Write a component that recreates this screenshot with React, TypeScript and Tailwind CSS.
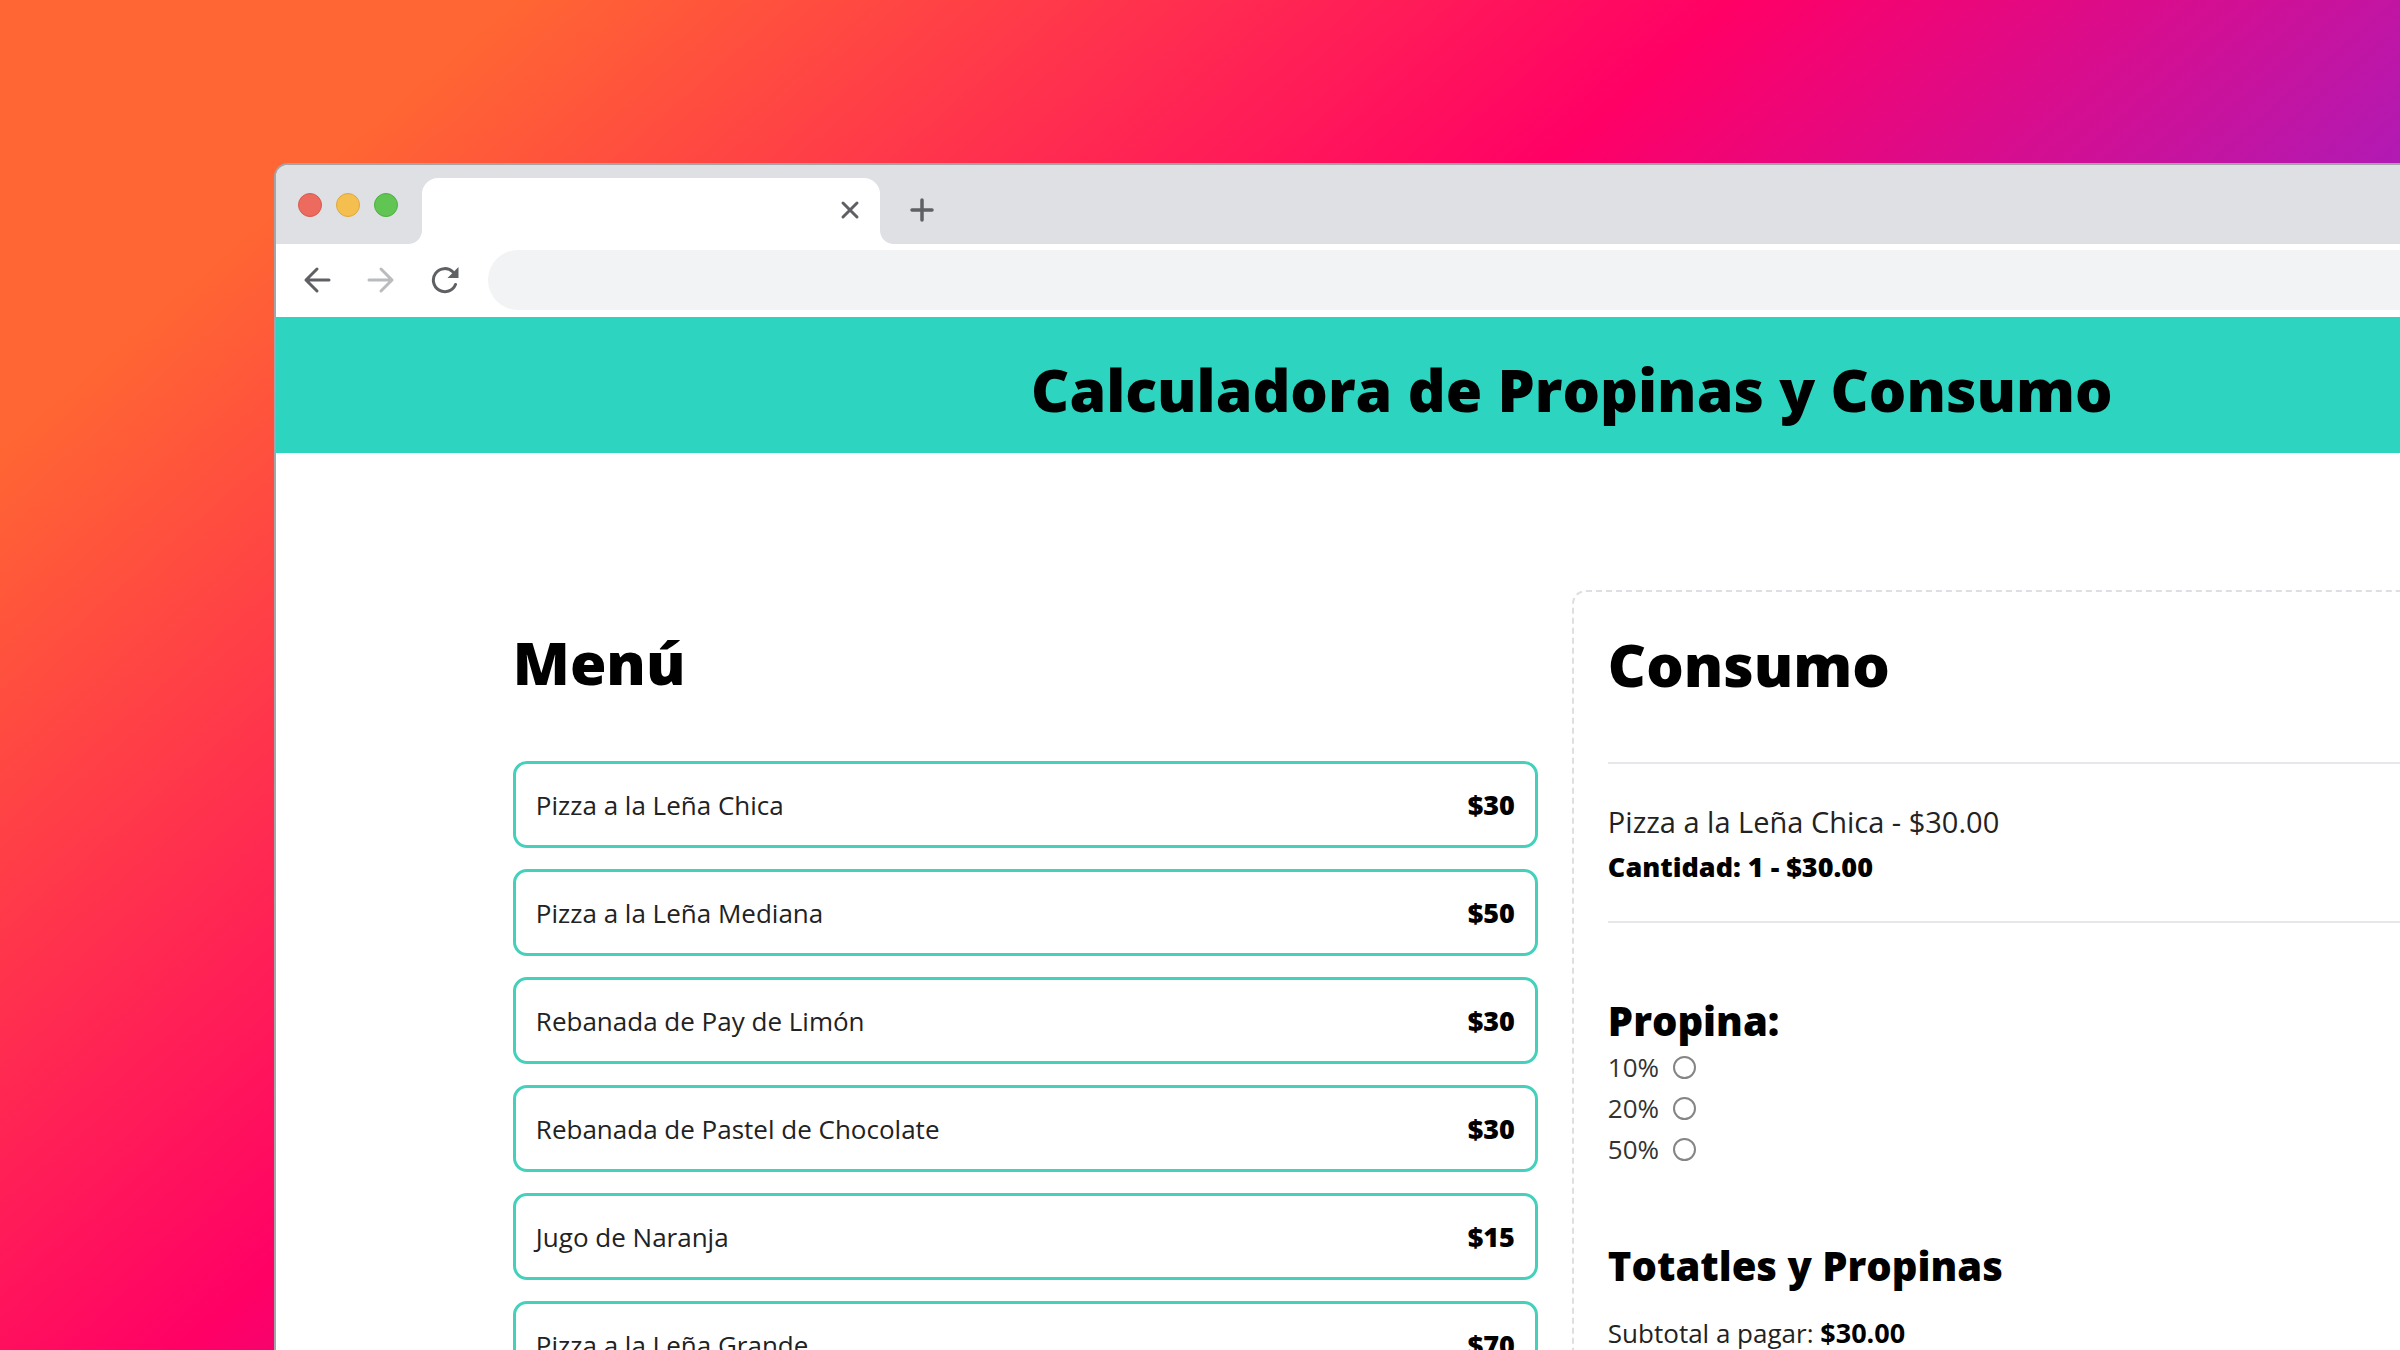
import React, { ReactNode } from "react";

const menu = [
  { id: 1, name: "Pizza a la Leña Chica", price: 30 },
  { id: 2, name: "Pizza a la Leña Mediana", price: 50 },
  { id: 3, name: "Rebanada de Pay de Limón", price: 30 },
  { id: 4, name: "Rebanada de Pastel de Chocolate", price: 30 },
  { id: 5, name: "Jugo de Naranja", price: 15 },
  { id: 6, name: "Pizza a la Leña Grande", price: 70 },
];

const tips = ["10%", "20%", "50%"];

function Icon({ children }: { children: ReactNode }) {
  return (
    <svg
      viewBox="0 0 28 28"
      className="size-7"
      fill="none"
      stroke="currentColor"
      strokeWidth="3"
      strokeLinecap="round"
      strokeLinejoin="round"
      aria-hidden="true"
    >
      {children}
    </svg>
  );
}

function TabBar() {
  return (
    <div className="flex h-[79px] items-end bg-[#dee0e4]">
      <div className="flex gap-[14px] self-center pl-[22px]">
        <span className="size-6 rounded-full border border-[#d65a50] bg-[#ed6a5e]" />
        <span className="size-6 rounded-full border border-[#dea73e] bg-[#f5bf4f]" />
        <span className="size-6 rounded-full border border-[#51ad42] bg-[#61c554]" />
      </div>
      <svg viewBox="0 0 14 14" className="ml-[10px] size-[14px] fill-white" aria-hidden="true">
        <path d="M14 0V14H0C8 14 14 8 14 0Z" />
      </svg>
      <div className="flex h-[66px] w-[458px] items-center justify-end rounded-t-[16px] bg-white pr-4 pb-[2px]">
        <button type="button" aria-label="Cerrar pestaña" className="text-[#5f6063]">
          <Icon>
            <path d="M7 7L21 21M21 7L7 21" />
          </Icon>
        </button>
      </div>
      <svg viewBox="0 0 14 14" className="size-[14px] fill-white" aria-hidden="true">
        <path d="M0 0V14H14C6 14 0 8 0 0Z" />
      </svg>
      <button type="button" aria-label="Nueva pestaña" className="mb-5 ml-[14px] text-[#5f6063]">
        <Icon>
          <path d="M14 4V24M4 14H24" strokeWidth="3.500" />
        </Icon>
      </button>
    </div>
  );
}

function Toolbar() {
  return (
    <div className="flex h-[73px] items-center bg-white pb-[2px] pl-[27px]">
      <div className="flex gap-9">
        <button type="button" aria-label="Atrás" className="text-[#5f6063]">
          <Icon>
            <path d="M26 14H3M14 3L3 14L14 25" />
          </Icon>
        </button>
        <button type="button" aria-label="Adelante" className="text-[#babbbd]">
          <Icon>
            <path d="M2 14H25M14 3L25 14L14 25" />
          </Icon>
        </button>
        <button type="button" aria-label="Recargar" className="text-[#5f6063]">
          <Icon>
            <path d="M24.500 18.500A11.500 11.500 0 1 1 22 6" />
            <path d="M27.500 1V12H16.500Z" fill="currentColor" stroke="none" />
          </Icon>
        </button>
      </div>
      <input
        type="text"
        aria-label="Dirección"
        className="ml-[29px] h-[60px] min-w-0 flex-1 rounded-l-full bg-[#f1f3f4] px-8 text-2xl outline-none"
      />
    </div>
  );
}

function Menu() {
  return (
    <section className="p-[34px]">
      <h2 className="text-[59px] leading-[76px] font-black">Menú</h2>
      <div className="mt-[61px] flex flex-col gap-[21px]">
        {menu.map((item) => (
          <button
            key={item.id}
            type="button"
            className="flex h-[87px] w-full items-center justify-between rounded-[14px] border-3 border-[#45d0bc] px-5 pt-[2px] text-[26px]"
          >
            <span className="text-[#222]">{item.name}</span>
            <span className="text-[27px] font-black">${item.price}</span>
          </button>
        ))}
      </div>
    </section>
  );
}

function Order() {
  return (
    <section className="rounded-[14px] border-2 border-dashed border-[#dddfe3] p-[34px]">
      <h2 className="text-[59px] leading-[76px] font-black">Consumo</h2>
      <div className="mt-[60px] border-y-2 border-gray-200 pt-[35px] pb-8 leading-[45px]">
        <p className="text-[29px] text-[#222]">Pizza a la Leña Chica - $30.00</p>
        <p className="text-[27px] font-black">Cantidad: 1 - $30.00</p>
      </div>
      <fieldset className="mt-[74px] leading-[41px]">
        <legend className="pb-[2px] text-[40px] leading-[48px] font-black">Propina:</legend>
        {tips.map((tip) => (
          <label key={tip} className="flex items-center gap-[14px] text-[26px] text-[#333]">
            {tip}
            <input type="radio" name="tip" value={tip} className="size-[23px] appearance-none rounded-full border-2 border-[#858585]" />
          </label>
        ))}
      </fieldset>
      <h3 className="mt-[72px] text-[40px] leading-[48px] font-black">Totatles y Propinas</h3>
      <p className="mt-[22px] text-[26px] leading-[41px] text-[#222]">
        Subtotal a pagar: <span className="text-[27px] font-bold text-black">$30.00</span>
      </p>
    </section>
  );
}

export default function App() {
  return (
    <div className="h-screen overflow-hidden bg-[linear-gradient(139deg,#ff6633_13%,#ff0066_44%,#6633ff_86%)] pt-[163px] pl-[274px] font-['Open_Sans','Noto_Sans',sans-serif] text-black">
      <div className="w-[122%] overflow-hidden rounded-t-[14px] border-t-2 border-l-2 border-[#a3a5a8] bg-white">
        <TabBar />
        <Toolbar />
        <header className="bg-[#2dd4bf] pt-8 pb-6 text-center">
          <h1 className="text-[59px] leading-[80px] font-black">Calculadora de Propinas y Consumo</h1>
        </header>
        <main className="mx-auto grid max-w-[2186px] grid-cols-2 py-[137px]">
          <Menu />
          <Order />
        </main>
      </div>
    </div>
  );
}
